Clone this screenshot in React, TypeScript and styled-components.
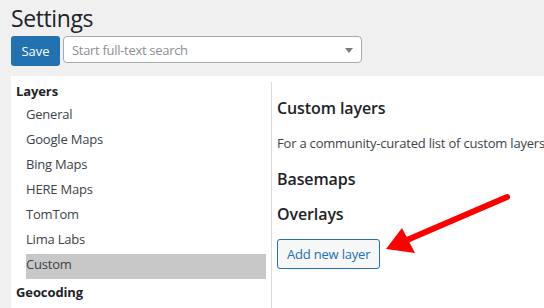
import styled, { createGlobalStyle } from 'styled-components'

const GlobalStyle = createGlobalStyle`
  html, body {
    margin: 0;
    padding: 0;
    background: #f0f0f1;
    font-family: "Open Sans", "Noto Sans", sans-serif;
    color: #1d2327;
    overflow: hidden;
  }
`

const Page = styled.div`
  position: relative;
  width: 544px;
  height: 308px;
  padding-left: 11px;
  box-sizing: border-box;
  overflow: hidden;
`

const Title = styled.h1`
  margin: 0;
  padding-top: 2px;
  height: 34px;
  font-size: 23px;
  font-weight: 400;
  line-height: 32px;
  color: #1d2327;
  letter-spacing: -0.4px;
`

const Toolbar = styled.div`
  display: flex;
  align-items: flex-start;
  gap: 3px;
`

const SaveButton = styled.button`
  width: 49px;
  height: 30px;
  border: none;
  border-radius: 3px;
  background: #2271b1;
  color: #fff;
  font-family: inherit;
  font-size: 13px;
  padding: 0;
  cursor: pointer;
`

const Search = styled.div`
  position: relative;
  width: 299px;
  height: 27px;
  box-sizing: border-box;
  border: 1px solid #a7aaad;
  border-radius: 4px;
  background: #fff;
  display: flex;
  align-items: center;
  padding-left: 8px;
  font-size: 13px;
  letter-spacing: -0.3px;
  color: #8c8f94;
`

const Caret = styled.span`
  position: absolute;
  right: 8px;
  top: 11px;
  width: 0;
  height: 0;
  border-left: 4px solid transparent;
  border-right: 4px solid transparent;
  border-top: 5px solid #787c82;
`

const Panel = styled.div`
  margin-top: 10px;
  background: #fff;
  display: grid;
  grid-template-columns: 260px 1fr;
  height: 240px;
`

const Sidebar = styled.nav`
  padding: 5px 5px 0 5px;
`

const GroupTitle = styled.div<{ $gap?: number }>`
  margin-top: ${p => p.$gap ?? 0}px;
  height: 23px;
  font-size: 13px;
  font-weight: 700;
  line-height: 21px;
  letter-spacing: -0.1px;
  color: #1d2327;
`

const Item = styled.div<{ $active?: boolean }>`
  margin-left: 10px;
  height: 25px;
  line-height: 20px;
  font-size: 13px;
  letter-spacing: -0.2px;
  color: #3c434a;
  background: ${p => (p.$active ? '#c8c8c8' : 'transparent')};
`

const Content = styled.section`
  margin-top: 6px;
  border-left: 1px solid #dcdcde;
  padding: 14px 0 0 5px;
  white-space: nowrap;
  overflow: hidden;
`

const Heading = styled.h2<{ $gap?: number }>`
  margin: ${p => p.$gap ?? 0}px 0 0;
  font-size: 16px;
  font-weight: 600;
  line-height: 24px;
  letter-spacing: -0.1px;
  color: #1d2327;
`

const Text = styled.p`
  margin: 13px 0 0;
  font-size: 13px;
  line-height: 20px;
  letter-spacing: -0.2px;
  color: #3c434a;
`

const OutlineButton = styled.button`
  margin-top: 13px;
  height: 30px;
  padding: 0 9px;
  border: 1px solid #2271b1;
  border-radius: 3px;
  background: #f6f7f7;
  color: #2271b1;
  font-family: inherit;
  font-size: 13px;
  letter-spacing: -0.2px;
  cursor: pointer;
`

const Arrow = styled.svg`
  position: absolute;
  left: 380px;
  top: 190px;
`

const groups = ['General', 'Google Maps', 'Bing Maps', 'HERE Maps', 'TomTom', 'Lima Labs', 'Custom']

export default function App() {
  return (
    <>
      <GlobalStyle />
      <Page>
        <Title>Settings</Title>
        <Toolbar>
          <SaveButton>Save</SaveButton>
          <Search>
            Start full-text search
            <Caret />
          </Search>
        </Toolbar>
        <Panel>
          <Sidebar>
            <GroupTitle>Layers</GroupTitle>
            {groups.map(g => (
              <Item key={g} $active={g === 'Custom'}>{g}</Item>
            ))}
            <GroupTitle $gap={3}>Geocoding</GroupTitle>
          </Sidebar>
          <Content>
            <Heading>Custom layers</Heading>
            <Text>For a community-curated list of custom layers and their settings, see the wiki.</Text>
            <Heading $gap={14}>Basemaps</Heading>
            <Heading $gap={11}>Overlays</Heading>
            <OutlineButton>Add new layer</OutlineButton>
          </Content>
        </Panel>
        <Arrow width="140" height="70" viewBox="0 0 140 70">
          <line x1="127" y1="7" x2="20" y2="53" stroke="#ff0000" strokeWidth="6" strokeLinecap="round" />
          <polygon points="6,59 22,38 35,63" fill="#ff0000" />
        </Arrow>
      </Page>
    </>
  )
}
